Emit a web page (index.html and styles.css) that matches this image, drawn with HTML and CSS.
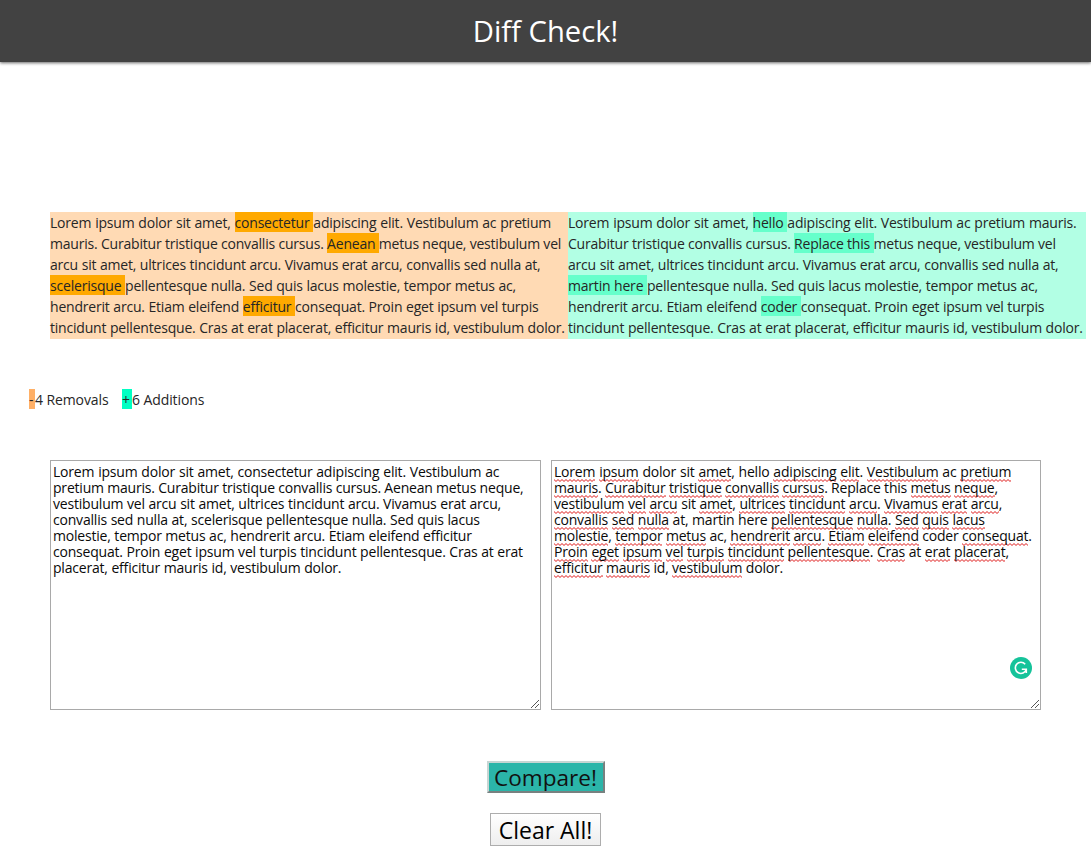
FILE: index.html
```html
<!DOCTYPE html>
<html lang="en">
<head>
<meta charset="utf-8">
<title>Diff Check!</title>
<link rel="stylesheet" href="styles.css">
</head>
<body>
<header class="topbar"><h1 class="title">Diff Check!</h1></header>
<main class="page">
<section class="diff">
<div class="pane removed"><p class="line loose">Lorem ipsum dolor sit amet, <mark>consectetur </mark>adipiscing elit. Vestibulum ac pretium</p><p class="line tight">mauris. Curabitur tristique convallis cursus. <mark>Aenean </mark>metus neque, vestibulum vel</p><p class="line">arcu sit amet, ultrices tincidunt arcu. Vivamus erat arcu, convallis sed nulla at,</p><p class="line"><mark>scelerisque </mark>pellentesque nulla. Sed quis lacus molestie, tempor metus ac,</p><p class="line">hendrerit arcu. Etiam eleifend <mark>efficitur </mark>consequat. Proin eget ipsum vel turpis</p><p class="line">tincidunt pellentesque. Cras at erat placerat, efficitur mauris id, vestibulum dolor.</p></div>
<div class="pane added"><p class="line loose">Lorem ipsum dolor sit amet, <mark>hello </mark>adipiscing elit. Vestibulum ac pretium mauris.</p><p class="line tight">Curabitur tristique convallis cursus. <mark>Replace this </mark>metus neque, vestibulum vel</p><p class="line">arcu sit amet, ultrices tincidunt arcu. Vivamus erat arcu, convallis sed nulla at,</p><p class="line"><mark>martin here </mark>pellentesque nulla. Sed quis lacus molestie, tempor metus ac,</p><p class="line">hendrerit arcu. Etiam eleifend <mark>coder </mark>consequat. Proin eget ipsum vel turpis</p><p class="line">tincidunt pellentesque. Cras at erat placerat, efficitur mauris id, vestibulum dolor.</p></div>
</section>
<section class="counts"><div class="count"><span class="sign minus">-</span>4 Removals</div><div class="count"><span class="sign plus">+</span>6 Additions</div></section>
<section class="inputs">
<div class="box"><p class="row loose">Lorem ipsum dolor sit amet, consectetur adipiscing elit. Vestibulum ac</p><p class="row tight">pretium mauris. Curabitur tristique convallis cursus. Aenean metus neque,</p><p class="row">vestibulum vel arcu sit amet, ultrices tincidunt arcu. Vivamus erat arcu,</p><p class="row">convallis sed nulla at, scelerisque pellentesque nulla. Sed quis lacus</p><p class="row">molestie, tempor metus ac, hendrerit arcu. Etiam eleifend efficitur</p><p class="row">consequat. Proin eget ipsum vel turpis tincidunt pellentesque. Cras at erat</p><p class="row">placerat, efficitur mauris id, vestibulum dolor.</p>
<svg class="grip" viewBox="0 0 10 10"><path d="M1 9L9 1M5 9L9 5"/></svg></div>
<div class="box"><p class="row loose"><u>Lorem</u> <u>ipsum</u> dolor sit <u>amet</u>, hello <u>adipiscing</u> <u>elit</u>. <u>Vestibulum</u> ac <u>pretium</u></p><p class="row tight"><u>mauris</u>. <u>Curabitur</u> <u>tristique</u> <u>convallis</u> <u>cursus</u>. Replace this <u>metus</u> <u>neque</u>,</p><p class="row"><u>vestibulum</u> <u>vel</u> <u>arcu</u> sit <u>amet</u>, <u>ultrices</u> <u>tincidunt</u> <u>arcu</u>. <u>Vivamus</u> <u>erat</u> <u>arcu</u>,</p><p class="row"><u>convallis</u> <u>sed</u> <u>nulla</u> at, martin here <u>pellentesque</u> <u>nulla</u>. <u>Sed</u> <u>quis</u> <u>lacus</u></p><p class="row tight"><u>molestie</u>, <u>tempor</u> <u>metus</u> ac, <u>hendrerit</u> <u>arcu</u>. <u>Etiam</u> <u>eleifend</u> coder <u>consequat</u>.</p><p class="row"><u>Proin</u> <u>eget</u> <u>ipsum</u> <u>vel</u> <u>turpis</u> <u>tincidunt</u> <u>pellentesque</u>. <u>Cras</u> at <u>erat</u> <u>placerat</u>,</p><p class="row tight"><u>efficitur</u> <u>mauris</u> id, <u>vestibulum</u> dolor.</p>
<svg class="grip" viewBox="0 0 10 10"><path d="M1 9L9 1M5 9L9 5"/></svg>
<svg class="badge" viewBox="0 0 22 22"><circle cx="11" cy="11" r="11" fill="#15c39a"/><path d="M15.2 7.2A5.6 5.6 0 1 0 16.3 12.6M11.8 12.2H16.3V16" fill="none" stroke="#fff" stroke-width="1.6"/></svg></div>
</section>
<section class="actions"><button class="btn compare">Compare!</button><button class="btn clear">Clear All!</button></section>
</main>
</body>
</html>
```
FILE: styles.css
```css
* { box-sizing: border-box; }
body { margin: 0; background: #fff; color: #262626; font-family: "Open Sans", "Noto Sans", sans-serif; font-size: 14px; overflow: hidden; }
p, h1 { margin: 0; }
.topbar { height: 62px; background: #424242; box-shadow: 0 1px 3px rgba(0,0,0,.6); display: flex; justify-content: center; }
.title { color: #fff; font-weight: 400; font-size: 29.2px; line-height: 63px; white-space: nowrap; }
.page { padding-top: 150px; }
.diff { display: grid; grid-template-columns: 518px 518px; margin-left: 50px; height: 127px; }
.line { height: 21px; line-height: 21px; white-space: pre; letter-spacing: -.2px; word-spacing: .25px; }
.removed { background: #ffdab4; }
.added { background: #b2ffe4; }
mark { display: inline-block; height: 20px; vertical-align: top; color: inherit; background: #ffa900; white-space: pre; }
.added mark { background: #66ffcb; }
.counts { display: flex; gap: 14px; margin: 50px 0 0 29px; height: 21px; line-height: 21px; letter-spacing: -.1px; }
.count { white-space: nowrap; }
.count:first-child { width: 79px; }
.sign { display: inline-block; height: 20px; vertical-align: top; }
.minus { background: #ffb066; width: 6px; }
.plus { background: #00ffc3; width: 10px; }
.inputs { display: grid; grid-template-columns: 491px 490px; gap: 10px; margin: 50px 0 0 50px; }
.box { position: relative; height: 250px; border: 1px solid #a9a9a9; padding: 3px 2px; color: #0a0a0a; }
.row { height: 16px; line-height: 16px; white-space: pre; letter-spacing: -.2px; word-spacing: .25px; }
.loose { word-spacing: .45px; }
.tight { word-spacing: 0; }
u { display: inline-block; height: 18px; text-decoration: none; background: url("data:image/svg+xml,%3Csvg xmlns='http://www.w3.org/2000/svg' width='4' height='3'%3E%3Cpath d='M-1 1.5L0 .5L2 2.5L4 .5L5 1.5' fill='none' stroke='%23d11' stroke-width='1'/%3E%3C/svg%3E") left bottom repeat-x; vertical-align: top; }
.grip { position: absolute; right: 0; bottom: 0; width: 10px; height: 10px; fill: none; stroke: #555; stroke-width: 1; }
.badge { position: absolute; right: 8px; bottom: 30px; width: 22px; height: 22px; }
.actions { display: flex; flex-direction: column; align-items: center; gap: 20px; margin-top: 51px; }
.btn { font: 400 22.6px/27px "Open Sans", sans-serif; color: #111; padding: 0; height: 33px; white-space: nowrap; }
.compare { width: 118px; height: 32px; background: #2bb5a9; border: 2px outset #c7d5d3; }
.clear { width: 111px; border: 1px solid #adadad; background: linear-gradient(#fff, #eee); color: #000; font-size: 23px; line-height: 29px; padding-top: 1px; }
```
